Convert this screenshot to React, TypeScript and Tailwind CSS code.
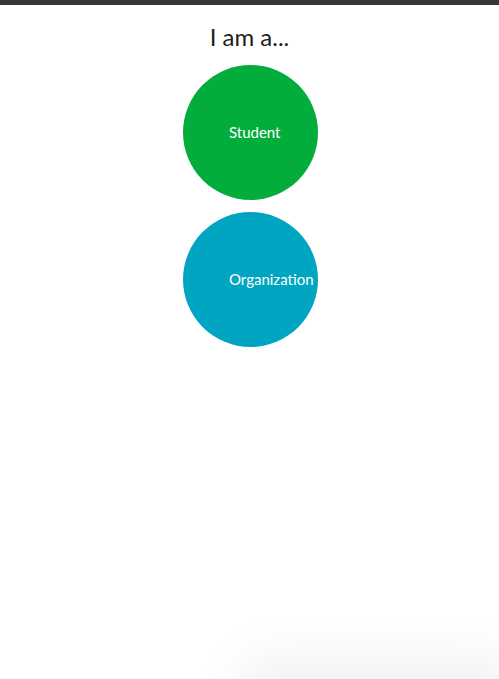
export default function App() {
  const options = [
    { label: "Student", color: "bg-[#03ad3c]" },
    { label: "Organization", color: "bg-[#00a6c1]" },
  ];

  return (
    <div className="relative h-[679px] w-full overflow-hidden bg-white" style={{ fontFamily: "Lato, 'Open Sans', sans-serif" }}>
      <div className="h-[5px] w-full bg-[#35353a]" />

      <h1 className="mt-[16px] text-center text-[24px] font-normal leading-[32px] text-[#1e1e1e]">I am a...</h1>

      <div className="mt-[12px] flex flex-col items-center gap-[12px]">
        {options.map((o) => (
          <button
            key={o.label}
            className={`ml-[2px] flex h-[135px] w-[135px] items-center rounded-full pl-[46px] text-[15px] whitespace-nowrap text-white ${o.color}`}
          >
            {o.label}
          </button>
        ))}
      </div>

      {/* faint shadow bottom right */}
      <div className="pointer-events-none absolute bottom-[-50px] right-[-20px] h-[70px] w-[280px] rounded-full bg-black/[0.06] blur-[25px]" />
    </div>
  );
}
